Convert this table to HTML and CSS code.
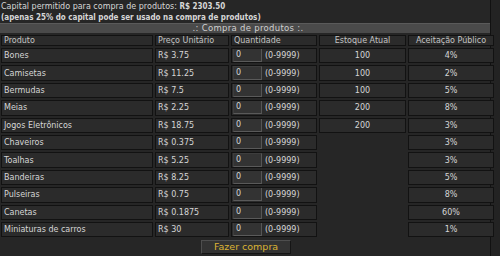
FILE: index.html
```html
<!DOCTYPE html>
<html>
<head>
<meta charset="utf-8">
<link rel="stylesheet" href="styles.css">
</head>
<body>
<div class="panel">
  <div class="info">
    <div class="line">Capital permitido para compra de produtos: <b class="cond">R$ 2303.50</b></div>
    <div class="line strong">(apenas 25% do capital pode ser usado na compra de produtos)</div>
  </div>
  <div class="title">.: Compra de produtos :.</div>
  <table class="grid">
    <tr class="head">
      <td class="c-prod">Produto</td>
      <td class="c-price">Preço Unitário</td>
      <td class="c-qty">Quantidade</td>
      <td class="c-stock center">Estoque Atual</td>
      <td class="c-acc center">Aceitação Público</td>
    </tr>
    <tr><td>Bones</td><td>R$ 3.75</td><td class="qty"><span class="inp">0</span><span class="range">(0-9999)</span></td><td class="center">100</td><td class="center">4%</td></tr>
    <tr><td>Camisetas</td><td>R$ 11.25</td><td class="qty"><span class="inp">0</span><span class="range">(0-9999)</span></td><td class="center">100</td><td class="center">2%</td></tr>
    <tr><td>Bermudas</td><td>R$ 7.5</td><td class="qty"><span class="inp">0</span><span class="range">(0-9999)</span></td><td class="center">100</td><td class="center">5%</td></tr>
    <tr><td>Meias</td><td>R$ 2.25</td><td class="qty"><span class="inp">0</span><span class="range">(0-9999)</span></td><td class="center">200</td><td class="center">8%</td></tr>
    <tr><td>Jogos Eletrônicos</td><td>R$ 18.75</td><td class="qty"><span class="inp">0</span><span class="range">(0-9999)</span></td><td class="center">200</td><td class="center">3%</td></tr>
    <tr><td>Chaveiros</td><td>R$ 0.375</td><td class="qty"><span class="inp">0</span><span class="range">(0-9999)</span></td><td class="none"></td><td class="center">3%</td></tr>
    <tr><td>Toalhas</td><td>R$ 5.25</td><td class="qty"><span class="inp">0</span><span class="range">(0-9999)</span></td><td class="none"></td><td class="center">3%</td></tr>
    <tr><td>Bandeiras</td><td>R$ 8.25</td><td class="qty"><span class="inp">0</span><span class="range">(0-9999)</span></td><td class="none"></td><td class="center">5%</td></tr>
    <tr><td>Pulseiras</td><td>R$ 0.75</td><td class="qty"><span class="inp">0</span><span class="range">(0-9999)</span></td><td class="none"></td><td class="center">8%</td></tr>
    <tr><td>Canetas</td><td>R$ 0.1875</td><td class="qty"><span class="inp">0</span><span class="range">(0-9999)</span></td><td class="none"></td><td class="center">60%</td></tr>
    <tr><td>Miniaturas de carros</td><td>R$ 30</td><td class="qty"><span class="inp">0</span><span class="range">(0-9999)</span></td><td class="none"></td><td class="center">1%</td></tr>
  </table>
  <div class="actions"><span class="btn">Fazer compra</span></div>
</div>
</body>
</html>
```
FILE: styles.css
```css
html, body {
  margin: 0;
  padding: 0;
  background: #232323;
}
body {
  font-family: "DejaVu Sans", Verdana, sans-serif;
  font-size: 8px;
  color: #d6d6d6;
  width: 500px;
  height: 256px;
  overflow: hidden;
}
.panel {
  width: 490px;
  height: 256px;
  background: #262626;
  border-right: 1px solid #111;
}
.info {
  padding: 1px 0 0 1px;
}
.line {
  height: 11px;
  line-height: 11px;
  white-space: nowrap;
}
.strong,
.cond {
  font-family: "DejaVu Sans Condensed", "DejaVu Sans", sans-serif;
  font-weight: bold;
}
.title {
  height: 9px;
  line-height: 9px;
  background: #4a4a4a;
  border-top: 1px solid #5a5a5a;
  text-align: center;
  color: #d0d0d0;
  font-size: 8.5px;
  letter-spacing: 0.3px;
  padding-left: 6px;
}
.grid {
  border-collapse: separate;
  border-spacing: 2px;
  margin: 0 -1px;
  width: 494px;
  table-layout: fixed;
}
.grid td {
  background: #2b2b2b;
  border: 1px solid #121212;
  height: 13.4px;
  padding: 0 0 0 2px;
  line-height: 13px;
  white-space: nowrap;
  overflow: hidden;
}
.grid td.center {
  text-align: center;
  padding-left: 0;
}
.grid td.none {
  background: transparent;
  border-color: transparent;
}
.grid .head td {
  color: #c4c4c4;
  height: 9px;
  line-height: 9px;
}
.c-prod { width: 148px; }
.c-price { width: 70px; }
.c-qty { width: 82px; }
.c-stock { width: 85px; }
.c-acc { width: 84px; }
.inp {
  display: inline-block;
  vertical-align: middle;
  box-sizing: border-box;
  width: 29px;
  height: 14px;
  line-height: 12px;
  margin: -1px 3px 0 -1px;
  padding-left: 2px;
  background: #333;
  border: 1px solid #3d3d3d;
  border-bottom-color: #5a5a5a;
  border-right-color: #555;
}
.range {
  vertical-align: middle;
}
.actions {
  text-align: center;
  padding: 1px 0 0 2px;
}
.btn {
  display: inline-block;
  box-sizing: border-box;
  width: 90px;
  height: 14px;
  line-height: 12px;
  background: #333;
  border: 1px solid #4e4e4e;
  border-right-color: #151515;
  border-bottom-color: #151515;
  color: #dcb434;
  font-size: 9.5px;
}
```
